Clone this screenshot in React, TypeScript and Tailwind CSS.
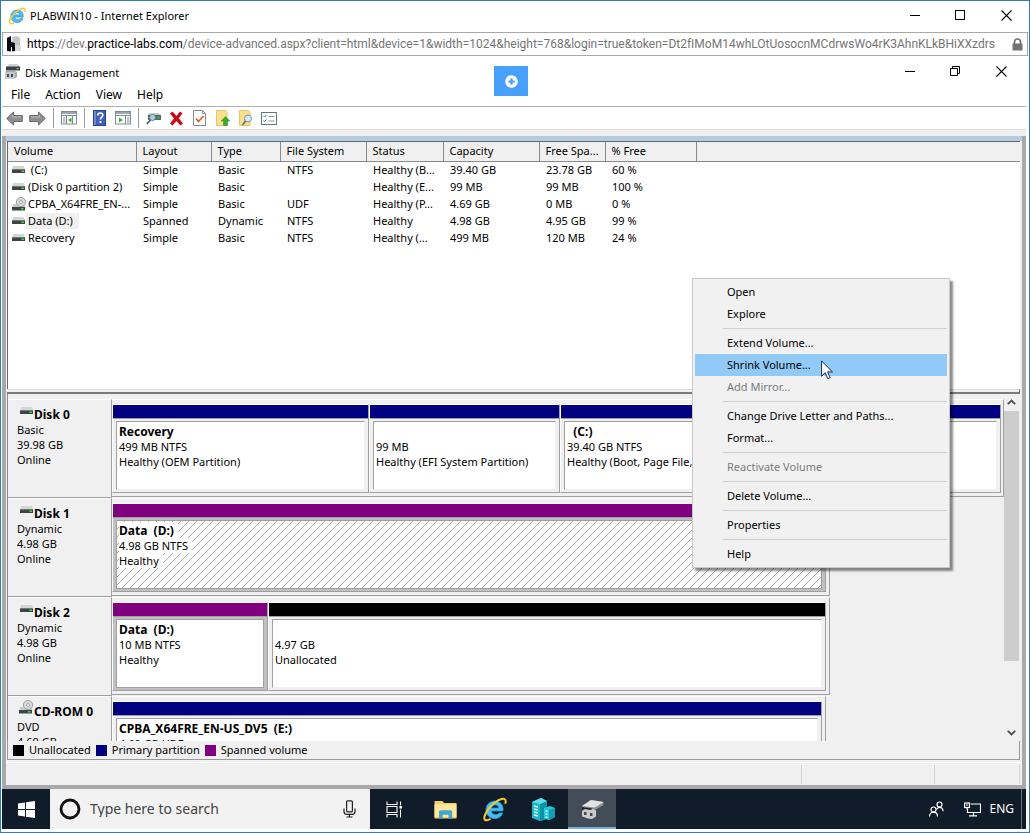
import React from "react";

type IconProps = { className?: string };

function DriveIcon({ className }: IconProps) {
  return (
    <svg className={className} width="13" height="8" viewBox="0 0 13 8" aria-hidden="true">
      <path d="M1 0h11l1 4H0z" fill="#d4d6d6" />
      <rect x="0" y="3" width="13" height="4" fill="#3c4444" />
      <rect x="0" y="3" width="13" height="1" fill="#6f7777" />
      <rect x="9.500" y="4.500" width="2.500" height="1.500" fill="#3fd44c" />
    </svg>
  );
}

function DiscDriveIcon({ className }: IconProps) {
  return (
    <svg className={className} width="14" height="14" viewBox="0 0 14 14" aria-hidden="true">
      <path d="M1 7h11l1.500 4H0z" fill="#c9cccc" />
      <circle cx="9" cy="5" r="4.600" fill="#d9dbdb" stroke="#8d9191" strokeWidth=".8" />
      <circle cx="9" cy="5" r="1.500" fill="#fff" stroke="#8d9191" strokeWidth=".8" />
      <rect x="0" y="10" width="13" height="3.500" fill="#3c4444" />
      <rect x="9" y="11" width="2.500" height="1.500" fill="#3fd44c" />
    </svg>
  );
}

function IeIcon({ size }: { size: number }) {
  return (
    <svg width={size} height={size} viewBox="0 0 24 24" aria-hidden="true">
      <path
        d="M20 13.500H9c.2 2.100 1.800 3.300 4 3.300 1.500 0 2.700-.5 3.400-1.500h3.500c-1.200 3.400-4 5.500-7.500 5.500-4.900 0-8.600-3.500-8.600-8.400 0-4.900 3.700-8.500 8.600-8.500 4.800 0 7.900 3.400 7.900 8.200 0 .5-.1.900-.3 1.400zM9.100 10.500h6.900c-.3-1.800-1.500-2.900-3.300-2.900s-3.200 1.100-3.600 2.900z"
        fill="#4cbcf0"
        stroke="#1f8ccc"
        strokeWidth=".8"
      />
      <path
        d="M22.300 6.500c.8-2.400.5-4.200-1-4.700-2.700-.9-8.600 2.300-13.200 7.500C3.500 14.400 1 20 2.800 21.800c1 1 3 .6 5.400-.9"
        fill="none"
        stroke="#f5cb2f"
        strokeWidth="1.900"
      />
    </svg>
  );
}

function SiteIcon() {
  return (
    <svg width="15" height="16" viewBox="0 0 15 16" aria-hidden="true">
      <path d="M5 1l5-1 3 2v13H5z" fill="#c6c6c6" />
      <path d="M8 9l6 1v5H8z" fill="#dadada" />
      <path d="M0 2l4-2v6l4 1v8l-3 .5V11H4v4.500L0 15z" fill="#0b0b0b" />
    </svg>
  );
}

function LockIcon() {
  return (
    <svg width="11" height="13" viewBox="0 0 11 13" aria-hidden="true">
      <path d="M2.500 6V4a3 3 0 0 1 6 0v2" fill="none" stroke="#737373" strokeWidth="1.700" />
      <rect x=".5" y="5.500" width="10" height="7" fill="#737373" />
    </svg>
  );
}

function DiskMgmtIcon() {
  return (
    <svg width="17" height="15" viewBox="0 0 17 15" aria-hidden="true">
      <path d="M5 0h9l2 3H3z" fill="#d0d2d2" />
      <rect x="2" y="2.500" width="14" height="4" fill="#3b4141" />
      <rect x="12.500" y="4" width="2" height="1.200" fill="#7bd07d" />
      <path d="M2 7h9l2 1v5l-2 1.500H1V8z" fill="#a9abab" />
      <rect x="1" y="8" width="10" height="6.500" fill="#c6c8c8" />
      <rect x="3" y="10" width="2" height="3" fill="#4a4d4d" />
      <rect x="7" y="10" width="2" height="3" fill="#4a4d4d" />
    </svg>
  );
}

function MinimizeGlyph() {
  return (
    <svg width="11" height="11" viewBox="0 0 11 11" shapeRendering="crispEdges" aria-hidden="true">
      <rect x="0" y="5" width="10" height="1" fill="#000" />
    </svg>
  );
}

function MaximizeGlyph() {
  return (
    <svg width="11" height="11" viewBox="0 0 11 11" aria-hidden="true">
      <rect x=".5" y=".5" width="9" height="9" fill="none" stroke="#000" />
    </svg>
  );
}

function RestoreGlyph() {
  return (
    <svg width="11" height="11" viewBox="0 0 11 11" aria-hidden="true">
      <path d="M.5 2.500h7v7h-7zM2.500 2.500v-2h7v7h-2" fill="none" stroke="#000" />
    </svg>
  );
}

function CloseGlyph() {
  return (
    <svg width="11" height="11" viewBox="0 0 11 11" aria-hidden="true">
      <path d="M.5.5l10 10M10.500.5l-10 10" fill="none" stroke="#000" strokeWidth="1.100" />
    </svg>
  );
}

function ArrowIcon({ flip }: { flip?: boolean }) {
  return (
    <svg width="17" height="15" viewBox="0 0 17 15" aria-hidden="true">
      <path
        d={flip ? "M16.300 7.500L9.500 1v3.500H.7v6h8.800V14z" : "M.7 7.500L7.500 1v3.500h8.800v6H7.500V14z"}
        fill="#8f8f8f"
        stroke="#6a6a6a"
        strokeWidth="1"
      />
      <path d={flip ? "M2 6h8.500V4" : "M15 6H6.500V4"} fill="none" stroke="#bdbdbd" strokeWidth="1" />
    </svg>
  );
}

function PaneIcon({ right }: { right?: boolean }) {
  return (
    <svg width="16" height="14" viewBox="0 0 16 14" aria-hidden="true">
      <rect x=".5" y=".5" width="15" height="12.500" fill="#fff" stroke="#7f8b93" />
      <rect x="1" y="1" width="14" height="2" fill="#9aa7b0" />
      <path d="M1 4.500h14" stroke="#7f8b93" />
      {right ? (
        <>
          <path d="M10.500 5v8" stroke="#7f8b93" />
          <path d="M4 6.500l4 2.500-4 2.500z" fill="#3fae3a" />
          <path d="M12 7h2.500M12 9h2.500M12 11h2.500" stroke="#7f8b93" />
        </>
      ) : (
        <>
          <path d="M5.500 5v8M11.500 5v8" stroke="#7f8b93" />
          <path d="M10.500 6.500L7 9l3.500 2.500z" fill="#3fae3a" />
          <path d="M2 7h2.500M2 9h2.500M2 11h2.500" stroke="#7f8b93" />
        </>
      )}
    </svg>
  );
}

function HelpIcon() {
  return (
    <svg width="13" height="16" viewBox="0 0 13 16" aria-hidden="true">
      <rect x=".5" y=".5" width="12" height="15" fill="#3f5fb8" stroke="#27418f" />
      <rect x="1" y="1" width="2" height="14" fill="#6f89d3" />
      <path
        d="M4.800 5.500c0-1.600 1-2.500 2.500-2.500s2.500.9 2.500 2.200c0 1.900-2.400 2.100-2.400 4.300"
        fill="none"
        stroke="#fff"
        strokeWidth="1.700"
      />
      <rect x="6.500" y="11" width="1.900" height="1.900" fill="#fff" />
    </svg>
  );
}

function ConnectIcon() {
  return (
    <svg width="16" height="13" viewBox="0 0 16 13" aria-hidden="true">
      <path d="M3 1h10l2 3H1z" fill="#c8cbcb" />
      <rect x="2" y="3" width="13" height="5" fill="#596563" />
      <rect x="11.500" y="4.500" width="2" height="2" fill="#47c05b" />
      <circle cx="6.500" cy="5.500" r="3" fill="#a9cfe4" stroke="#5f7f90" />
      <path d="M4.500 8L.8 12" stroke="#52606a" strokeWidth="1.800" />
    </svg>
  );
}

function DeleteIcon() {
  return (
    <svg width="15" height="15" viewBox="0 0 15 15" aria-hidden="true">
      <path
        d="M1 2.500L3.500.5 7.500 5l3.500-4.500 2.500 1.800L9.800 7.200l4.200 5.300-2.600 2L7.500 10l-4 4.500-2.500-2 4-5z"
        fill="#c80a14"
      />
    </svg>
  );
}

function CheckDocIcon() {
  return (
    <svg width="13" height="16" viewBox="0 0 13 16" aria-hidden="true">
      <path d="M.5.5h9l3 3v12H.5z" fill="#fff" stroke="#8a8a8a" />
      <path d="M9.500.5v3h3" fill="none" stroke="#8a8a8a" />
      <path d="M3 8.500l2.500 3 5-5.500" fill="none" stroke="#e0562b" strokeWidth="1.600" />
    </svg>
  );
}

function FolderUpIcon() {
  return (
    <svg width="14" height="16" viewBox="0 0 14 16" aria-hidden="true">
      <path d="M.5.5h9l1.500 2v13H.5z" fill="#fbe08c" stroke="#e3c670" />
      <path d="M9.500 6.500L13.800 11h-2.300v4.500h-4V11H5.200z" fill="#3daa2f" stroke="#2b8a20" strokeWidth=".5" />
    </svg>
  );
}

function FolderSearchIcon() {
  return (
    <svg width="15" height="16" viewBox="0 0 15 16" aria-hidden="true">
      <path d="M1.500.5h9l1.500 2v13H1.500z" fill="#fbe08c" stroke="#e3c670" />
      <circle cx="10" cy="8.500" r="3.500" fill="#d5eaf5" stroke="#7d97a6" />
      <path d="M7.500 11l-3 4" stroke="#5c6f7a" strokeWidth="1.600" />
    </svg>
  );
}

function ListIcon() {
  return (
    <svg width="16" height="13" viewBox="0 0 16 13" aria-hidden="true">
      <rect x=".5" y=".5" width="15" height="12" fill="#fff" stroke="#6b747b" />
      <path d="M2.500 4l1 1L5.500 3M2.500 8.500l1 1 2-2" fill="none" stroke="#2f7fc6" />
      <path d="M7.500 4.500h6M7.500 9h6" stroke="#8d979e" />
    </svg>
  );
}

function CursorIcon() {
  return (
    <svg width="13" height="20" viewBox="0 0 13 20" aria-hidden="true">
      <path
        d="M.6 1v15.200l3.600-3.500 2.500 5.900 2.400-1-2.500-5.700h4.900z"
        fill="#fff"
        stroke="#1b2a4a"
        strokeWidth="1"
      />
    </svg>
  );
}

function ToolButton({ label, children }: { label: string; children: React.ReactNode }) {
  return (
    <button type="button" aria-label={label} className="flex h-5 w-[23px] items-center justify-center">
      {children}
    </button>
  );
}

function ToolDivider() {
  return (
    <span className="flex h-5 w-2 justify-center">
      <span className="w-px bg-[#9a9a9a]" />
    </span>
  );
}

function WindowControls({ restored }: { restored?: boolean }) {
  return (
    <div className="flex">
      <button type="button" aria-label="Minimize" className="flex h-7 w-[46px] items-center justify-center">
        <MinimizeGlyph />
      </button>
      <button type="button" aria-label={restored ? "Restore" : "Maximize"} className="flex h-7 w-[45px] items-center justify-center">
        {restored ? <RestoreGlyph /> : <MaximizeGlyph />}
      </button>
      <button type="button" aria-label="Close" className="flex h-7 w-[46px] items-center justify-center">
        <CloseGlyph />
      </button>
    </div>
  );
}

const columns = ["Volume", "Layout", "Type", "File System", "Status", "Capacity", "Free Spa...", "% Free"];

const volumes = [
  { name: " (C:)", cells: ["Simple", "Basic", "NTFS", "Healthy (B...", "39.40 GB", "23.78 GB", "60 %"] },
  { name: "(Disk 0 partition 2)", cells: ["Simple", "Basic", "", "Healthy (E...", "99 MB", "99 MB", "100 %"] },
  { name: "CPBA_X64FRE_EN-...", disc: true, cells: ["Simple", "Basic", "UDF", "Healthy (P...", "4.69 GB", "0 MB", "0 %"] },
  { name: "Data (D:)", selected: true, cells: ["Spanned", "Dynamic", "NTFS", "Healthy", "4.98 GB", "4.95 GB", "99 %"] },
  { name: "Recovery", cells: ["Simple", "Basic", "NTFS", "Healthy (...", "499 MB", "120 MB", "24 %"] },
];

function VolumeTable() {
  return (
    <table className="w-full table-fixed border-collapse text-left">
      <colgroup>
        <col className="w-[128px]" />
        <col className="w-[75px]" />
        <col className="w-[69px]" />
        <col className="w-[86px]" />
        <col className="w-[77px]" />
        <col className="w-[96px]" />
        <col className="w-[66px]" />
        <col className="w-[91px]" />
        <col />
      </colgroup>
      <thead>
        <tr className="h-[19px] bg-[#f0f0f0]">
          {columns.map((c) => (
            <th key={c} scope="col" className="border-r border-b border-[#8a8a8a] p-0 pl-[6px] font-normal whitespace-nowrap">
              {c}
            </th>
          ))}
          <td className="border-b border-[#8a8a8a] p-0" />
        </tr>
      </thead>
      <tbody>
        {volumes.map((v, i) => (
          <tr key={i} className="h-[17px]">
            <td className="p-0 pl-1">
              <span className="flex items-center whitespace-pre">
                <span className="flex w-[14px] shrink-0">{v.disc ? <DiscDriveIcon /> : <DriveIcon />}</span>
                <span className={v.selected ? "bg-[#f0f0f0] pr-[6px] pl-[2px]" : "pl-[2px]"}>{v.name}</span>
              </span>
            </td>
            {v.cells.map((c, j) => (
              <td key={j} className="p-0 pl-[7px] whitespace-nowrap">
                {c}
              </td>
            ))}
            <td className="p-0" />
          </tr>
        ))}
      </tbody>
    </table>
  );
}

function Hatch() {
  return (
    <svg className="absolute inset-0 h-full w-full" aria-hidden="true">
      <defs>
        <pattern id="hatch" width="8" height="8" patternUnits="userSpaceOnUse">
          <path d="M-1 9L9-1M-1 1L1-1M7 9l2-2" stroke="#a0a0a0" strokeWidth=".9" />
        </pattern>
      </defs>
      <rect width="100%" height="100%" fill="url(#hatch)" />
    </svg>
  );
}

type VolumeProps = {
  title?: string;
  lines: string[];
  color: "primary" | "spanned" | "free";
  highlighted?: boolean;
  hatched?: boolean;
};

const barColors = { primary: "bg-[#000080]", spanned: "bg-[#800080]", free: "bg-black" };

function VolumeBlock({ title, lines, color, highlighted, hatched }: VolumeProps) {
  return (
    <div className="flex h-[89px] min-w-0 flex-col border-t border-r border-b border-l border-t-white border-r-[#a0a0a0] border-b-[#a0a0a0] border-l-white">
      <div className={`h-[13px] shrink-0 ${barColors[color]}`} />
      <div className={`flex-1 border-t border-[#a0a0a0] px-[3px] py-[2px] ${highlighted ? "bg-[#c0c0c0]" : "bg-[#f0f0f0]"}`}>
        <div
          className={`relative h-full overflow-hidden border bg-white pt-[2px] pl-[2px] whitespace-pre ${
            highlighted ? "border-[#a0a0a0]" : "border-t-[#a0a0a0] border-r-[#f0f0f0] border-b-[#f0f0f0] border-l-[#a0a0a0]"
          }`}
        >
          {hatched && <Hatch />}
          <div className="relative leading-[15px]">
            <div className="h-[15px] text-[12px] font-bold">
              <span className={hatched ? "bg-white pr-1" : ""}>{title}</span>
            </div>
            {lines.map((l) => (
              <div key={l} className="h-[15px]">
                <span className={hatched ? "bg-white pr-1" : ""}>{l}</span>
              </div>
            ))}
          </div>
        </div>
      </div>
    </div>
  );
}

function DiskRow({
  name,
  lines,
  disc,
  paneClass,
  gridClass,
  children,
}: {
  name: string;
  lines: string[];
  disc?: boolean;
  paneClass: string;
  gridClass: string;
  children: React.ReactNode;
}) {
  return (
    <div className="flex h-[99px] shrink-0">
      <div className="w-[104px] shrink-0 border-t border-r border-b border-t-white border-r-[#a0a0a0] border-b-[#a0a0a0] pt-[7px] pl-[9px] leading-[15px]">
        <div className="flex h-[15px] text-[12px] font-bold whitespace-nowrap">
          <span className="flex w-[17px] shrink-0 justify-end pr-px">
            {disc ? <DiscDriveIcon className="-mt-1 shrink-0" /> : <DriveIcon className="shrink-0" />}
          </span>
          {name}
        </div>
        {lines.map((l) => (
          <div key={l}>{l}</div>
        ))}
      </div>
      <div className="min-w-0 flex-1">
        <div className={`h-[98px] border-t border-r border-b border-t-white border-r-[#a0a0a0] border-b-[#a0a0a0] pt-1 ${paneClass}`}>
          <div className={`grid ${gridClass}`}>{children}</div>
        </div>
      </div>
    </div>
  );
}

function ScrollBar() {
  return (
    <div className="flex w-4 shrink-0 flex-col bg-[#f0f0f0] pr-px">
      <button type="button" aria-label="Scroll up" className="flex h-[17px] items-center justify-center">
        <svg width="9" height="6" viewBox="0 0 9 6" aria-hidden="true">
          <path d="M.8 5.200L4.500 1.500l3.700 3.700" fill="none" stroke="#505050" strokeWidth="1.900" />
        </svg>
      </button>
      <div className="flex-1">
        <div className="h-[80%] bg-[#cdcdcd]" />
      </div>
      <button type="button" aria-label="Scroll down" className="flex h-[17px] items-center justify-center">
        <svg width="9" height="6" viewBox="0 0 9 6" aria-hidden="true">
          <path d="M.8.8l3.700 3.700L8.200.8" fill="none" stroke="#505050" strokeWidth="1.900" />
        </svg>
      </button>
    </div>
  );
}

const legend = [
  { label: "Unallocated", color: "bg-black" },
  { label: "Primary partition", color: "bg-[#000080]" },
  { label: "Spanned volume", color: "bg-[#800080]" },
];

const menuGroups: { label: string; active?: boolean; disabled?: boolean }[][] = [
  [{ label: "Open" }, { label: "Explore" }],
  [{ label: "Extend Volume..." }, { label: "Shrink Volume...", active: true }, { label: "Add Mirror...", disabled: true }],
  [{ label: "Change Drive Letter and Paths..." }, { label: "Format..." }],
  [{ label: "Reactivate Volume", disabled: true }],
  [{ label: "Delete Volume..." }],
  [{ label: "Properties" }],
  [{ label: "Help" }],
];

function ContextMenu() {
  return (
    <div
      role="menu"
      className="absolute top-[277px] left-[691px] w-[258px] border border-[#c8c8c8] bg-[#f1f1f1] p-[2px] shadow-[3px_3px_2px_rgba(0,0,0,0.45)]"
    >
      {menuGroups.map((g, i) => (
        <div key={i} role="group">
          {i > 0 && <div className="my-[3px] ml-7 h-px bg-[#d0d0d0]" />}
          {g.map((m) => (
            <button
              key={m.label}
              type="button"
              role="menuitem"
              disabled={m.disabled}
              className={`flex h-[22px] w-full items-center pl-8 text-left ${m.active ? "bg-[#91c9f7]" : ""} ${
                m.disabled ? "text-[#7a7a7a]" : "text-black"
              }`}
            >
              {m.label}
            </button>
          ))}
        </div>
      ))}
    </div>
  );
}

function TaskButton({ label, active, children }: { label: string; active?: boolean; children: React.ReactNode }) {
  return (
    <button
      type="button"
      aria-label={label}
      className={`flex w-12 items-center justify-center ${active ? "border-b-2 border-[#76b0e0] bg-[#434d58] pt-[2px]" : ""}`}
    >
      {children}
    </button>
  );
}

function TaskBar() {
  return (
    <footer className="flex h-10 shrink-0 bg-[#101c29]">
      <button type="button" aria-label="Start" className="flex w-12 items-center justify-center">
        <svg width="17" height="17" viewBox="0 0 17 17" aria-hidden="true">
          <path d="M0 2.400L7 1.500v6.600H0zM8 1.300L17 0v8.100H8zM0 9h7v6.600l-7-1zM8 9h9v8l-9-1.300z" fill="#fff" />
        </svg>
      </button>
      <div className="flex w-80 items-center bg-[#f2f2f2] pr-[14px] pl-[9px]">
        <svg width="22" height="22" viewBox="0 0 22 22" aria-hidden="true">
          <circle cx="11" cy="11" r="9" fill="none" stroke="#111" strokeWidth="2.800" />
        </svg>
        <input
          type="text"
          aria-label="Type here to search"
          placeholder="Type here to search"
          className="ml-[9px] min-w-0 flex-1 bg-transparent text-[14px] text-[#333] outline-none placeholder:text-[#444]"
        />
        <button type="button" aria-label="Voice search">
          <svg width="13" height="18" viewBox="0 0 13 18" fill="none" stroke="#222" strokeWidth="1.200" aria-hidden="true">
            <rect x="3.600" y=".8" width="5.800" height="11" rx="1" />
            <path d="M1 8.500v3c0 1.800 1 2.800 2.800 2.800h5.400c1.800 0 2.800-1 2.800-2.800v-3M6.500 14.300v2.500M3.500 17h6" />
          </svg>
        </button>
      </div>
      <TaskButton label="Task View">
        <svg width="17" height="17" viewBox="0 0 17 17" fill="none" stroke="#fff" strokeWidth="1.100" aria-hidden="true">
          <path d="M1 .5v3h10v-3M1 16.500v-3h10v3M1 5.500h10v6H1zM14.500.5v4M14.500 8.500v8" />
          <rect x="13.500" y="5" width="2.500" height="2.500" fill="#fff" stroke="none" />
        </svg>
      </TaskButton>
      <div className="ml-[3px] flex gap-px">
        <TaskButton label="File Explorer">
          <svg width="23" height="19" viewBox="0 0 23 19" aria-hidden="true">
            <path d="M.5 1h8l1.500 2h12.500v15.500H.5z" fill="#f5cf6b" />
            <path d="M.5 4.500h22v12.500H.5z" fill="#fde79c" />
            <path d="M5 18.500V12c0-1 .7-1.700 1.700-1.700h9.800c1 0 1.700.7 1.700 1.700v6.500h-3.700v-3.800H8.700v3.800z" fill="#45a6cf" />
          </svg>
        </TaskButton>
        <TaskButton label="Internet Explorer">
          <IeIcon size={25} />
        </TaskButton>
        <TaskButton label="Server Manager">
          <svg width="23" height="23" viewBox="0 0 23 23" aria-hidden="true">
            <path d="M0 4l9-4 6 3v18l-7 2-8-3z" fill="#16b9c8" />
            <path d="M8 6l7-3v18l-7 2z" fill="#0e91a0" />
            <path d="M0 4l9-4 6 3-7 3z" fill="#5de0ea" />
            <path d="M12 10l6-2 5 2v9l-6 3-5-1.500z" fill="#20cad9" />
            <path d="M17 12l6-2v9l-6 3z" fill="#0fa0b0" />
            <path
              d="M2 8l4 1M2 11l4 1M2 14l4 1M2 17l4 1M13.500 13l2 .5M13.500 16l2 .5M13.500 19l2 .5"
              stroke="#d8fbff"
              strokeWidth="1.300"
            />
          </svg>
        </TaskButton>
        <TaskButton label="Disk Management" active>
          <svg width="23" height="21" viewBox="0 0 23 21" aria-hidden="true">
            <path d="M1 7l9-6 12.500 2v3L14 11 1 9z" fill="#8e9090" />
            <path d="M1 7l9-6 12.500 2L14 8.500z" fill="#e3e4e4" />
            <path d="M1 8l10 1.500v2L1 10z" fill="#1f2222" />
            <path d="M1 12l3-2 5 1 3-1 3 1.500v6L11 20l-4-.5-6-2z" fill="#c9caca" />
            <path d="M3 13h2.500v3H3zM9 14h2.500v3H9z" fill="#4c4750" />
          </svg>
        </TaskButton>
      </div>
      <div className="ml-auto flex items-center pr-1 text-[12px] text-white">
        <button type="button" aria-label="People" className="mr-[19px]">
          <svg width="17" height="17" viewBox="0 0 17 17" fill="none" stroke="#fff" strokeWidth="1.200" aria-hidden="true">
            <circle cx="11.500" cy="3.500" r="2.500" />
            <path d="M8.500 8.500c.6-1.400 1.700-2.200 3-2.200 2 0 3.500 1.700 3.500 3.900" />
            <circle cx="5.500" cy="8.500" r="2.500" />
            <path d="M1.500 15.500c0-2.500 1.700-4.300 4-4.300s4 1.800 4 4.300" />
          </svg>
        </button>
        <button type="button" aria-label="Network" className="mr-2">
          <svg width="17" height="15" viewBox="0 0 17 15" fill="none" stroke="#fff" strokeWidth="1.200" aria-hidden="true">
            <path d="M6.500 2h10v8.500h-13V6.500M9.500 10.500v3M5 13.800h8" />
            <rect x=".6" y="1" width="4.800" height="4.500" />
            <path d="M3 5.500v2M2 3h2" />
          </svg>
        </button>
        <button type="button" className="mr-[7px]">ENG</button>
        <span className="h-10 w-px bg-[#65707a]" />
      </div>
    </footer>
  );
}

export default function App() {
  return (
    <div className="relative flex h-screen flex-col overflow-hidden border border-[#2f7fb5] bg-white pr-[3px] pb-[3px] pl-px font-['Noto_Sans','Open_Sans',sans-serif] text-[11px] leading-4 text-black">
      <header className="-mr-[3px] flex h-[31px] shrink-0 items-center pb-[2px] pl-[6px]">
        <IeIcon size={18} />
        <h1 className="ml-1 flex-1">PLABWIN10 - Internet Explorer</h1>
        <WindowControls />
      </header>

      <div className="-mr-[2px] flex h-6 shrink-0 items-center overflow-hidden border border-[#a8a8a8] pr-1 pl-[4px] whitespace-nowrap">
        <SiteIcon />
        <div className="mx-[5px] min-w-0 flex-1 overflow-hidden font-[Roboto,sans-serif] text-[12px] text-[#757575]">
          <span className="text-black">https</span>://dev.<span className="text-black">practice-labs.com</span>
          /device-advanced.aspx?client=html&amp;device=1&amp;width=1024&amp;height=768&amp;login=true&amp;token=Dt2fIMoM14whLOtUosocnMCdrwsWo4rK3AhnKLkBHiXXzdrs
        </div>
        <LockIcon />
      </div>

      <div className="flex h-[31px] shrink-0 items-center pr-[2px] pl-[2px]">
        <DiskMgmtIcon />
        <h2 className="ml-1 flex-1 pt-[2px]">Disk Management</h2>
        <WindowControls restored />
      </div>
      <nav className="flex h-5 shrink-0 items-start gap-[15px] border-b border-[#b0b0b0] pl-[9px] text-[12px]">
        <button type="button">File</button>
        <button type="button">Action</button>
        <button type="button">View</button>
        <button type="button">Help</button>
      </nav>
      <div className="flex h-[23px] shrink-0 items-center border-b border-[#dcdcdc] pl-px">
        <ToolButton label="Back"><ArrowIcon /></ToolButton>
        <ToolButton label="Forward"><ArrowIcon flip /></ToolButton>
        <ToolDivider />
        <ToolButton label="Show or hide console tree"><PaneIcon /></ToolButton>
        <ToolDivider />
        <ToolButton label="Help"><HelpIcon /></ToolButton>
        <ToolButton label="Show or hide action pane"><PaneIcon right /></ToolButton>
        <ToolDivider />
        <ToolButton label="Settings"><ConnectIcon /></ToolButton>
        <ToolButton label="Delete"><DeleteIcon /></ToolButton>
        <ToolButton label="Mark partition"><CheckDocIcon /></ToolButton>
        <ToolButton label="Open folder"><FolderUpIcon /></ToolButton>
        <ToolButton label="Explore folder"><FolderSearchIcon /></ToolButton>
        <ToolButton label="Properties"><ListIcon /></ToolButton>
      </div>

      <div className="h-[6px] shrink-0 bg-[#f0f0f0]" />
      <div className="flex min-h-0 flex-1 flex-col border-r-4 border-b-4 border-l-4 border-[#a9a9a9] bg-[#f0f0f0]">
        <main className="flex min-h-0 flex-1 flex-col border-t-[5px] border-t-[#b4cbe0] pr-[2px] pl-px">
          <section aria-label="Volumes" className="min-h-0 flex-[247_247_0%] overflow-hidden border-t border-l border-[#696969] bg-white">
            <VolumeTable />
          </section>
          <div className="h-[5px] shrink-0 border-t border-r border-b-2 border-t-[#dcdcdc] border-r-[#696969] border-b-[#7a7a7a] bg-[#f0f0f0]" />
          <section aria-label="Disks" className="flex min-h-0 flex-[348_348_0%] border-l border-[#8a8a8a]">
            <div className="flex min-w-0 flex-1 flex-col overflow-hidden pt-[5px]">
              <DiskRow name="Disk 0" lines={["Basic", "39.98 GB", "Online"]} paneClass="w-full pr-[2px]" gridClass="grid-cols-[257fr_191fr_441fr]">
                <VolumeBlock color="primary" title="Recovery" lines={["499 MB NTFS", "Healthy (OEM Partition)"]} />
                <VolumeBlock color="primary" lines={["99 MB", "Healthy (EFI System Partition)"]} />
                <VolumeBlock color="primary" title="  (C:)" lines={["39.40 GB NTFS", "Healthy (Boot, Page File, Crash Dump)"]} />
              </DiskRow>
              <DiskRow name="Disk 1" lines={["Dynamic", "4.98 GB", "Online"]} paneClass="w-[80.5%] pr-[3px]" gridClass="grid-cols-1">
                <VolumeBlock color="spanned" highlighted hatched title="Data  (D:)" lines={["4.98 GB NTFS", "Healthy"]} />
              </DiskRow>
              <DiskRow name="Disk 2" lines={["Dynamic", "4.98 GB", "Online"]} paneClass="w-[80.5%] pr-[3px]" gridClass="grid-cols-[156fr_558fr]">
                <VolumeBlock color="spanned" highlighted title="Data  (D:)" lines={["10 MB NTFS", "Healthy"]} />
                <VolumeBlock color="free" lines={["4.97 GB", "Unallocated"]} />
              </DiskRow>
              <DiskRow name="CD-ROM 0" disc lines={["DVD", "4.69 GB"]} paneClass="w-[80%] pr-[3px]" gridClass="grid-cols-1">
                <VolumeBlock color="primary" title="CPBA_X64FRE_EN-US_DV5  (E:)" lines={["4.69 GB UDF"]} />
              </DiskRow>
            </div>
            <ScrollBar />
          </section>
          <ul className="flex h-[19px] shrink-0 items-center border-r border-b border-l border-[#9a9a9a] pl-[5px]">
            {legend.map((l) => (
              <li key={l.label} className="mr-[5px] flex items-center gap-[5px]">
                <span className={`h-[11px] w-[11px] ${l.color}`} />
                {l.label}
              </li>
            ))}
          </ul>
        </main>
        <div className="mt-[2px] flex h-[23px] shrink-0 justify-end border-t border-white pt-[2px] pr-[2px] pb-px">
          <span className="w-[133px] border-l border-[#d4d4d4]" />
          <span className="w-[86px] border-r border-l border-[#d4d4d4]" />
        </div>
      </div>
      <TaskBar />

      <button
        type="button"
        aria-label="Expand toolbar"
        className="absolute top-[65px] left-1/2 -ml-[21px] flex h-[30px] w-[34px] items-center justify-center bg-[#47a0fb]"
      >
        <svg width="13" height="13" viewBox="0 0 13 13" aria-hidden="true">
          <circle cx="6.500" cy="6.500" r="6.300" fill="#fff" />
          <path d="M6.500 3.300v6.400M3.300 6.500h6.400" stroke="#47a0fb" strokeWidth="2" />
        </svg>
      </button>
      <ContextMenu />
      <span className="pointer-events-none absolute top-[359px] left-[820px]">
        <CursorIcon />
      </span>
    </div>
  );
}
